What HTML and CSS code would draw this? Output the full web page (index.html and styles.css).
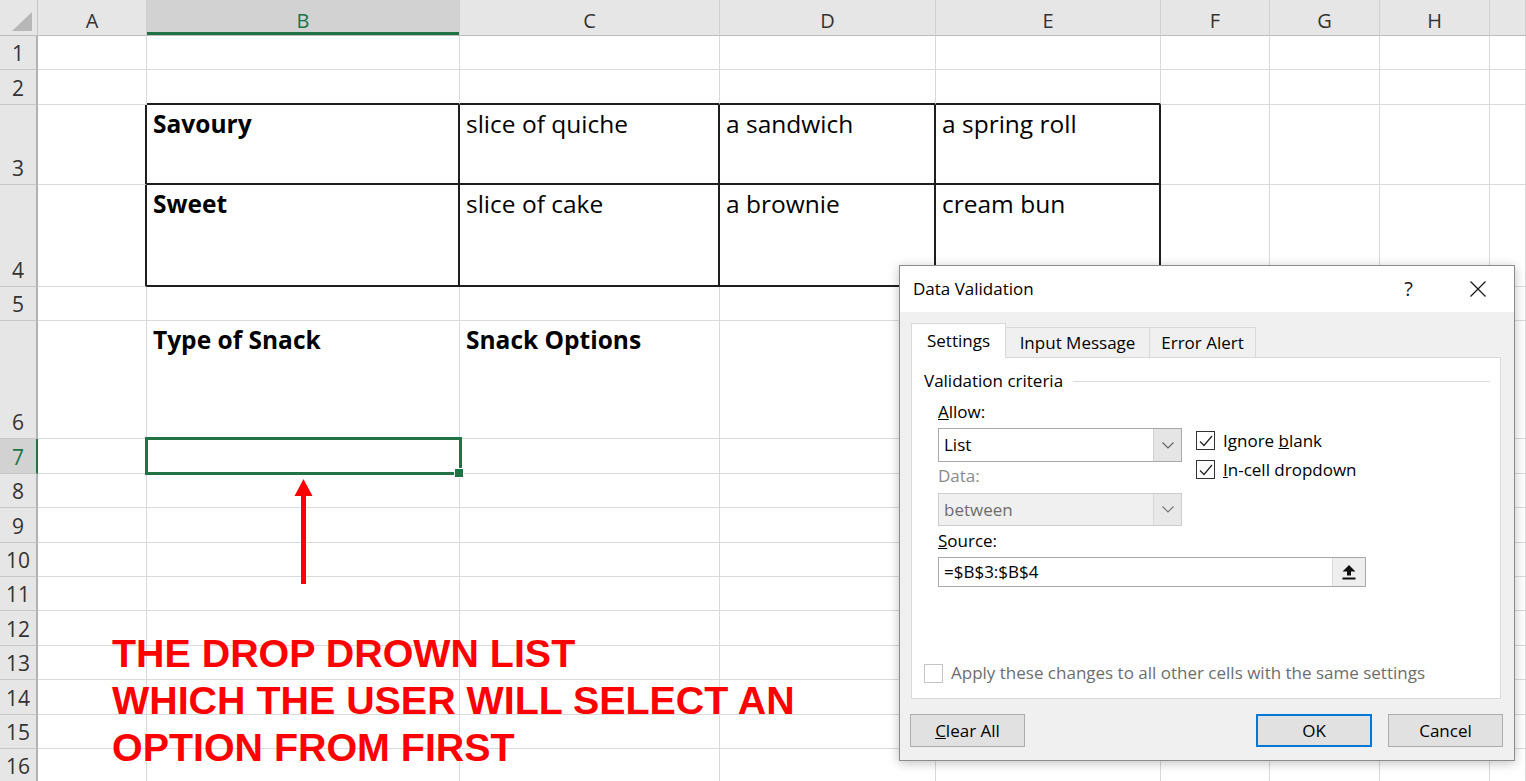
FILE: index.html
```html
<!DOCTYPE html>
<html lang="en">
<head>
  <meta charset="UTF-8">
  <meta name="viewport" content="width=device-width, initial-scale=1.0">
  <title>Data Validation</title>
  <link rel="stylesheet" href="styles.css">
</head>
<body>

  <div class="workbook">
    <!-- Worksheet grid, cells are built by the script below -->
    <div class="sheet" id="sheet"></div>

    <!-- Red annotation -->
    <svg class="arrow" width="24" height="110" viewBox="0 0 24 110">
      <polygon points="11.5,3 2.5,20 20.5,20" fill="#ff0000"/>
      <rect x="9" y="19" width="5" height="89" fill="#ff0000"/>
    </svg>
    <div class="note">THE DROP DROWN LIST<br>WHICH THE USER WILL SELECT AN<br>OPTION FROM FIRST</div>

    <!-- Data Validation dialog -->
    <div class="dialog">
      <div class="dlg-title">
        <span class="title-text">Data Validation</span>
        <span class="dlg-help">?</span>
        <svg class="dlg-close" width="16" height="16" viewBox="0 0 16 16">
          <path d="M0.5 0.5 L15.5 15.5 M15.5 0.5 L0.5 15.5" stroke="#1a1a1a" stroke-width="1.3" fill="none"/>
        </svg>
      </div>

      <div class="dlg-body">
        <div class="tabs">
          <div class="tab active">Settings</div>
          <div class="tab tab-input">Input Message</div>
          <div class="tab tab-error">Error Alert</div>
        </div>

        <div class="panel">
          <div class="group-title"><span>Validation criteria</span></div>

          <div class="criteria">
            <div class="criteria-left">
              <div class="field-label"><u>A</u>llow:</div>
              <div class="combo">
                <span class="value">List</span>
                <span class="combo-btn">
                  <svg width="12" height="7" viewBox="0 0 12 7"><path d="M0.5 0.5 L6 6 L11.5 0.5" stroke="#606060" stroke-width="1.1" fill="none"/></svg>
                </span>
              </div>
              <div class="field-label disabled gap-data">Data:</div>
              <div class="combo disabled short">
                <span class="value">between</span>
                <span class="combo-btn">
                  <svg width="12" height="7" viewBox="0 0 12 7"><path d="M0.5 0.5 L6 6 L11.5 0.5" stroke="#707070" stroke-width="1.1" fill="none"/></svg>
                </span>
              </div>
            </div>

            <div class="checks">
              <div class="check">
                <span class="box">
                  <svg width="14" height="12" viewBox="0 0 14 12"><path d="M1 6.5 L5 10.5 L13 1" stroke="#222" stroke-width="1.2" fill="none"/></svg>
                </span>
                <span>Ignore <u>b</u>lank</span>
              </div>
              <div class="check">
                <span class="box">
                  <svg width="14" height="12" viewBox="0 0 14 12"><path d="M1 6.5 L5 10.5 L13 1" stroke="#222" stroke-width="1.2" fill="none"/></svg>
                </span>
                <span><u>I</u>n-cell dropdown</span>
              </div>
            </div>
          </div>

          <div class="field-label gap-source"><u>S</u>ource:</div>
          <div class="source">
            <span class="value">=$B$3:$B$4</span>
            <span class="src-btn">
              <svg width="14" height="15" viewBox="0 0 14 15">
                <polygon points="7,0 13.5,6.5 9,6.5 9,10.5 5,10.5 5,6.5 0.5,6.5" fill="#111"/>
                <rect x="0.5" y="12.5" width="13" height="2" fill="#111"/>
              </svg>
            </span>
          </div>

          <div class="apply">
            <span class="box empty"></span>
            <span>Apply these changes to all other cells with the same settings</span>
          </div>
        </div>

        <div class="buttons">
          <button><u>C</u>lear All</button>
          <button class="default">OK</button>
          <button class="cancel">Cancel</button>
        </div>
      </div>
    </div>
  </div>

  <script>
    const columns = ['A', 'B', 'C', 'D', 'E', 'F', 'G', 'H', 'I'];
    const cellText = {
      B3: 'Savoury', C3: 'slice of quiche', D3: 'a sandwich', E3: 'a spring roll',
      B4: 'Sweet', C4: 'slice of cake', D4: 'a brownie', E4: 'cream bun',
      B6: 'Type of Snack', C6: 'Snack Options'
    };
    const boldCells = ['B3', 'B4', 'B6', 'C6'];
    const boxRight = ['A3', 'A4', 'B3', 'C3', 'D3', 'E3', 'B4', 'C4', 'D4', 'E4'];
    const boxBottom = ['B2', 'C2', 'D2', 'E2', 'B3', 'C3', 'D3', 'E3', 'B4', 'C4', 'D4', 'E4'];
    const activeCell = 'B7';

    function renderSheet() {
      const sheet = document.getElementById('sheet');
      let html = '<div class="corner"></div>';
      columns.forEach(c => {
        const current = activeCell[0] === c ? ' current' : '';
        html += `<div class="col-head${current}">${c === 'I' ? '' : c}</div>`;
      });
      for (let r = 1; r <= 16; r++) {
        const current = activeCell.slice(1) == r ? ' current' : '';
        html += `<div class="row-head${current}">${r}</div>`;
        columns.forEach(c => {
          const ref = c + r;
          let cls = 'cell';
          if (boldCells.includes(ref)) cls += ' bold';
          if (boxRight.includes(ref)) cls += ' box-r';
          if (boxBottom.includes(ref)) cls += ' box-b';
          if (ref === activeCell) cls += ' active';
          html += `<div class="${cls}">${cellText[ref] || ''}</div>`;
        });
      }
      sheet.innerHTML = html;
    }

    renderSheet();
  </script>
</body>
</html>
```

FILE: styles.css
```css
body {
  margin: 0;
  background: #ffffff;
  font-family: "Open Sans", sans-serif;
  color: #000;
  overflow: hidden;
}
.workbook {
  position: relative;
  width: 1526px;
  height: 781px;
  overflow: hidden;
}

/* Worksheet */
.sheet {
  display: grid;
  grid-template-columns: 38px 109px 313px 260px 216px 225px 109px 110px 110px 36px;
  grid-template-rows: 36px 34px 35px 80px 102px 34px 118px 35px 34px 35px 34px 34px 35px 34px 35px 34px 34px;
}
.sheet > div {
  box-sizing: border-box;
}
.corner,
.col-head,
.row-head {
  background: #e6e6e6;
  color: #333;
}
.corner {
  position: relative;
  border-right: 1px solid #c6c6c6;
  border-bottom: 1px solid #bdbdbd;
}
.corner::after {
  content: '';
  position: absolute;
  right: 5px;
  bottom: 4px;
  width: 20px;
  height: 19px;
  background: #b7b7b7;
  clip-path: polygon(100% 0, 100% 100%, 0 100%);
}
.col-head {
  font-size: 20px;
  line-height: 24px;
  display: flex;
  align-items: flex-end;
  justify-content: center;
  padding-bottom: 2px;
  border-right: 1px solid #d0d0d0;
  border-bottom: 1px solid #bdbdbd;
}
.col-head.current {
  background: #d2d2d2;
  color: #217346;
  box-shadow: inset 0 -3px #217346;
}
.row-head {
  font-size: 21px;
  line-height: 26px;
  display: flex;
  align-items: flex-end;
  justify-content: center;
  padding-bottom: 3px;
  border-right: 2px solid #b1b1b1;
  border-bottom: 1px solid #c6c6c6;
}
.row-head.current {
  background: #d2d2d2;
  color: #217346;
  border-right-color: #217346;
}
.cell {
  font-size: 24.5px;
  line-height: 32px;
  padding: 3px 6px 0;
  white-space: nowrap;
  border-right: 1px solid #dadada;
  border-bottom: 1px solid #dadada;
}
.cell.bold {
  font-weight: 700;
}
.cell.box-r {
  border-right: 2px solid #1e1e1e;
}
.cell.box-b {
  border-bottom: 2px solid #1e1e1e;
}
.cell.active {
  position: relative;
}
.cell.active::before {
  content: '';
  position: absolute;
  left: -2px;
  top: -2px;
  right: -3px;
  bottom: -2px;
  border: 3px solid #217346;
}
.cell.active::after {
  content: '';
  position: absolute;
  right: -5px;
  bottom: -5px;
  width: 8px;
  height: 8px;
  background: #217346;
  border: 1px solid #ffffff;
}

/* Annotation */
.arrow {
  position: absolute;
  left: 292px;
  top: 476px;
}
.note {
  position: absolute;
  left: 112px;
  top: 630px;
  font-family: "Liberation Sans", Arial, sans-serif;
  font-weight: 700;
  font-size: 39.4px;
  line-height: 47px;
  color: #ff0000;
  white-space: nowrap;
}

/* Dialog */
.dialog {
  position: absolute;
  left: 899px;
  top: 265px;
  width: 616px;
  height: 496px;
  box-sizing: border-box;
  border: 1px solid #8c8c8c;
  background: #f0f0f0;
  box-shadow: 0 2px 10px rgba(0, 0, 0, 0.25);
  font-size: 17px;
  line-height: 22px;
  display: flex;
  flex-direction: column;
}
.dlg-title {
  height: 46px;
  background: #ffffff;
  display: flex;
  align-items: center;
  padding: 0 28px 0 13px;
}
.title-text {
  flex: 1;
}
.dlg-help {
  font-size: 20px;
  margin-right: 57px;
  color: #1a1a1a;
}
.dlg-body {
  flex: 1;
  padding: 11px 13px 13px 11px;
  display: flex;
  flex-direction: column;
}
.tabs {
  display: flex;
  align-items: flex-end;
  height: 34px;
}
.tab {
  width: 95px;
  height: 30px;
  box-sizing: border-box;
  display: flex;
  align-items: center;
  justify-content: center;
  border: 1px solid #d9d9d9;
  border-left: none;
  border-bottom: none;
}
.tab.active {
  height: 35px;
  margin-bottom: -1px;
  background: #ffffff;
  border-left: 1px solid #d9d9d9;
  position: relative;
  z-index: 1;
}
.tab-input {
  width: 144px;
}
.tab-error {
  width: 106px;
}
.panel {
  height: 342px;
  box-sizing: border-box;
  background: #ffffff;
  border: 1px solid #d9d9d9;
  padding: 12px 10px 0 12px;
}
.group-title {
  display: flex;
  align-items: center;
}
.group-title::after {
  content: '';
  flex: 1;
  height: 1px;
  background: #dcdcdc;
  margin-left: 10px;
}
.criteria {
  display: flex;
  margin: 9px 0 0 14px;
}
.criteria-left {
  width: 244px;
}
.field-label.disabled {
  color: #8a8a8a;
}
.gap-data {
  margin-top: 3px;
}
.gap-source {
  margin: 4px 0 0 14px;
}
.combo {
  margin-top: 5px;
  height: 34px;
  box-sizing: border-box;
  border: 1px solid #a8a8a8;
  background: #ffffff;
  display: flex;
}
.combo.short {
  height: 33px;
  margin-top: 6px;
}
.combo .value,
.source .value {
  flex: 1;
  padding-left: 5px;
  align-self: center;
}
.combo-btn {
  width: 27px;
  background: #e5e5e5;
  border-left: 1px solid #d4d4d4;
  display: flex;
  align-items: center;
  justify-content: center;
}
.combo.disabled {
  background: #f0f0f0;
  border-color: #cccccc;
  color: #6d6d6d;
}
.combo.disabled .combo-btn {
  background: #e8e8e8;
  border-left-color: #d8d8d8;
}
.checks {
  margin: 25px 0 0 14px;
}
.check {
  height: 29px;
  display: flex;
  align-items: center;
}
.box {
  width: 19px;
  height: 19px;
  box-sizing: border-box;
  border: 1px solid #333;
  background: #ffffff;
  margin-right: 8px;
  display: flex;
  align-items: center;
  justify-content: center;
}
.box.empty {
  border-color: #c4c4c4;
}
.source {
  margin: 5px 0 0 14px;
  width: 428px;
  height: 30px;
  box-sizing: border-box;
  border: 1px solid #a8a8a8;
  display: flex;
}
.src-btn {
  width: 32px;
  background: #eeeeee;
  border-left: 1px solid #d8d8d8;
  display: flex;
  align-items: center;
  justify-content: center;
}
.apply {
  margin-top: 75px;
  display: flex;
  align-items: center;
  height: 22px;
  color: #6d6d6d;
}
.buttons {
  display: flex;
  margin-top: 15px;
}
button {
  font-family: "Open Sans", sans-serif;
  font-size: 17px;
  color: #000;
  width: 115px;
  height: 33px;
  background: #e1e1e1;
  border: 1px solid #adadad;
  padding: 0;
}
button:first-child {
  margin-left: -1px;
}
button.default {
  margin-left: auto;
  width: 116px;
  border: 2px solid #0078d7;
}
button.cancel {
  margin: 0 -2px 0 16px;
}
```
